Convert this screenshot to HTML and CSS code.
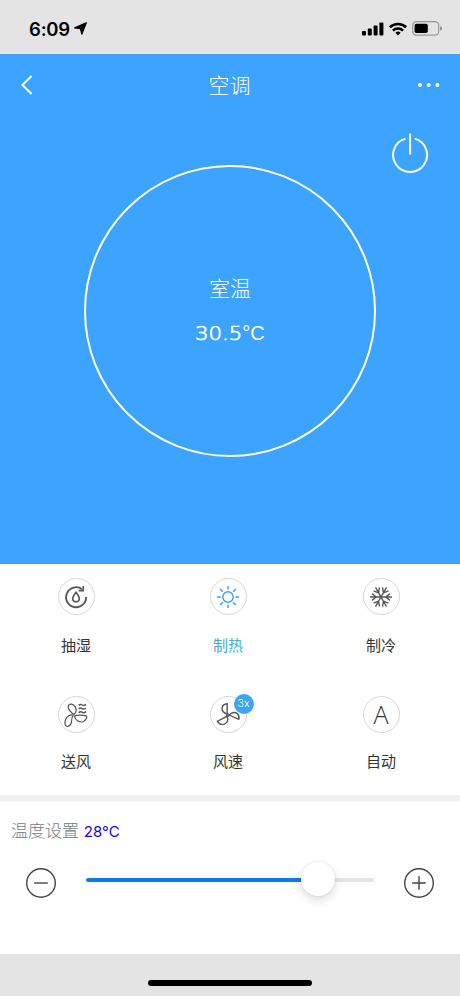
FILE: index.html
```html
<!DOCTYPE html>
<html lang="zh">
<head>
	<meta charset="utf-8">
	<meta name="viewport" content="width=device-width, initial-scale=1">
	<title>空调</title>
	<link rel="stylesheet" href="styles.css">
</head>
<body>
	<div class="status">
		<div class="time">
			<span>6:09</span>
			<svg width="13" height="13" viewBox="0 0 13 13"><path d="M12.3.7L7.8 12.2 6.4 6.6.6 5.9z" fill="#000" stroke="#000" stroke-width="1.2" stroke-linejoin="round"/></svg>
		</div>
		<div class="signals">
			<svg width="22" height="14" viewBox="0 0 22 14"><rect x="0" y="9" width="4" height="4.5" rx="1"/><rect x="5.8" y="6.5" width="4" height="7" rx="1"/><rect x="11.6" y="3.5" width="4" height="10" rx="1"/><rect x="17.4" y=".5" width="4" height="13" rx="1"/></svg>
			<svg width="18" height="14" viewBox="0 0 18 14" fill="none" stroke="#000" stroke-width="2.6"><path d="M.9 5.2a11.7 11.7 0 0 1 16.2 0M3.9 8.6a7.4 7.4 0 0 1 10.2 0"/><path d="M6.3 10.8a4 4 0 0 1 5.4 0L9 13.5z" fill="#000" stroke="none"/></svg>
			<svg width="31" height="15" viewBox="0 0 31 15"><rect x=".7" y=".7" width="26" height="13.4" rx="3.6" fill="none" stroke="#999" stroke-width="1.2"/><rect x="2.6" y="2.7" width="13.2" height="9.4" rx="1.8"/><path d="M28.2 5v4.8q1.8-.8 1.8-2.4T28.2 5z" fill="#888"/></svg>
		</div>
	</div>
	<header class="hero">
		<div class="nav">
			<svg class="back" width="14" height="20" viewBox="0 0 14 20"><path d="M11.6 1L2.4 10l9.2 9"/></svg>
			<h1>空调</h1>
			<svg class="more" width="24" height="6" viewBox="0 0 24 6"><circle cx="3" cy="3" r="2"/><circle cx="11.7" cy="3" r="2"/><circle cx="20.4" cy="3" r="2"/></svg>
		</div>
		<svg class="power" width="38" height="42" viewBox="0 0 38 42"><path d="M14.5 6.6a17 17 0 1 0 9.2 0M19.1 1.4v21"/></svg>
		<div class="dial">
			<p class="room">室温</p>
			<p class="degree"><span class="digits">30.5</span><span class="unit">°C</span></p>
		</div>
	</header>
	<main>
		<div class="modes">
			<div class="mode">
				<div class="icon"><svg width="26" height="26" viewBox="0 0 26 26"><path d="M19.2 5.3A10 10 0 1 0 23.1 13" stroke-width="1.8"/><path d="M20.3 2v4.6h-4.6M13 8.3c-2 2.7-3.3 4.4-3.3 6.3a3.3 3.3 0 0 0 6.6 0c0-1.9-1.3-3.6-3.3-6.3z" stroke-width="1.6"/></svg></div>
				<span>抽湿</span>
			</div>
			<div class="mode on">
				<div class="icon"><svg width="26" height="26" viewBox="0 0 26 26" stroke-width="1.4"><circle cx="13" cy="13" r="5.2"/><path d="M13 2v3.6M13 20.4V24M2 13h3.6M20.4 13H24M5.1 5.1l2.7 2.7M18.2 18.2l2.7 2.7M5.1 20.9l2.7-2.7M18.2 7.8l2.7-2.7"/></svg></div>
				<span>制热</span>
			</div>
			<div class="mode">
				<div class="icon">
					<svg width="26" height="26" viewBox="0 0 26 26" stroke-width="1.4">
						<g id="arm"><path d="M13 13H2M8.2 13L4 9.6M8.2 13L4 16.4"/></g>
						<use href="#arm" transform="rotate(60 13 13)"/><use href="#arm" transform="rotate(120 13 13)"/><use href="#arm" transform="rotate(180 13 13)"/><use href="#arm" transform="rotate(240 13 13)"/><use href="#arm" transform="rotate(300 13 13)"/>
					</svg>
				</div>
				<span>制冷</span>
			</div>
			<div class="mode low">
				<div class="icon"><svg width="26" height="26" viewBox="0 0 26 26" stroke-width="1.2"><path d="M11.3 12.2C8.6 12 4.4 6.6 5.4 3.6c1-2.4 5-1.8 6.8 1.3 1.3 2.4 1.2 5.4-.9 7.3z"/><path d="M10.2 13c-2.9-.9-6.4 1.3-7.7 4.8-1.1 3.1-.6 6.2 1.4 6.5 3.3.3 4.8-2.8 4.8-6.2 0-2.3.6-3.6 1.5-5.1z"/><path d="M11.4 14.1c2.7-1 8.8-.9 12-.2 1.3 1.4-.8 5-3.7 5.9-3.6.9-7.4-1.5-8.3-5.7z"/><path d="M15.6 3.4q1.8-1.6 3.6-.4t3.8-.6M15.6 7q1.8-1.6 3.6-.4t3.8-.6M15.6 10.6q1.8-1.6 3.6-.4t3.8-.6" stroke-width="1.5"/></svg></div>
				<span>送风</span>
			</div>
			<div class="mode low">
				<div class="icon">
					<svg width="26" height="26" viewBox="0 0 26 26" stroke-width="1.4"><path d="M12.2 11.9C8.4 11.2 6.4 8.4 7.2 5.2 7.9 2.9 9.8 2 12.2 1.8z"/><path d="M14.2 13.1c2.4-2.8 5.8-3.5 8.2-1.4 1.7 1.5 1.9 3.7 1.3 5.7z"/><path d="M12 14.3c1.6 3.3.5 6.6-2.6 7.9-2.8 1-5.6-.4-7-3z"/><circle cx="12.8" cy="13.1" r="1.2"/></svg>
					<i class="badge">3x</i>
				</div>
				<span>风速</span>
			</div>
			<div class="mode low">
				<div class="icon letter">A</div>
				<span>自动</span>
			</div>
		</div>
		<div class="setting">
			<p class="label">温度设置 <b>28°C</b></p>
			<div class="control">
				<svg class="step" width="30" height="30" viewBox="0 0 30 30"><circle cx="15" cy="15" r="14.3"/><path d="M8.2 15h13.6"/></svg>
				<div class="track"><div class="fill"></div><div class="thumb"></div></div>
				<svg class="step" width="30" height="30" viewBox="0 0 30 30"><circle cx="15" cy="15" r="14.3"/><path d="M8.2 15h13.6M15 8.2v13.6"/></svg>
			</div>
		</div>
	</main>
	<footer class="bottom"><div class="home"></div></footer>
</body>
</html>
```
FILE: styles.css
```css
*{box-sizing: border-box;}
body{margin: 0;height: 996px;display: flex;flex-direction: column;font-family: 'Inter', 'Noto Sans CJK SC', sans-serif;background-color: #fff;color: #333;}
svg{display: block;flex: none;}
p, h1{margin: 0;font-weight: normal;}

.status{height: 54px;padding: 3px 17px 0 29px;display: flex;justify-content: space-between;align-items: center;background-color: #e4e4e4;color: #000;}
.time, .signals{display: flex;align-items: center;}
.time{gap: 4px;font-size: 18.5px;font-weight: 600;letter-spacing: -0.2px;}
.signals{gap: 5px;}

.hero{height: 510px;display: flex;flex-direction: column;align-items: center;background-color: #3ca4ff;color: #fff;}
.nav{width: 100%;height: 62px;padding: 0 19px 0 20px;display: flex;justify-content: space-between;align-items: center;}
.nav h1{font-size: 21px;font-weight: 300;line-height: 30px;margin: 2px 0 0 8px;}
.back, .power{fill: none;stroke: #fff;stroke-width: 2;}
.more{fill: #fff;}
.power{align-self: flex-end;margin: 16px 31px 0 0;}
.dial{width: 292px;height: 292px;margin-top: -9.5px;padding-top: 107.5px;border: 2px solid #fff;border-radius: 50%;text-align: center;}
.room{font-size: 21px;font-weight: 300;line-height: 30px;}
.degree{display: flex;justify-content: center;align-items: center;height: 28px;margin-top: 15px;}
.digits{width: 47px;font-family: 'DejaVu Sans', sans-serif;font-size: 19px;font-weight: 200;text-align: left;-webkit-text-stroke: 0.7px #fff;transform: scaleX(1.12);transform-origin: left;}
.unit{font-family: 'Liberation Sans', sans-serif;font-size: 20px;}

.modes{height: 231px;padding: 14px 2px 0 0;display: grid;grid-template-columns: 152px 152px 154px;grid-auto-rows: 117px;}
.mode{display: flex;flex-direction: column;align-items: center;gap: 19px;font-size: 15px;line-height: 24px;}
.low{padding-top: 1px;gap: 17px;}
.icon{position: relative;width: 37px;height: 37px;display: flex;justify-content: center;align-items: center;border: 1px solid #d6d6d6;border-radius: 50%;}
.icon svg{fill: none;stroke: #555;}
.on{color: #43acd0;}
.on svg{stroke: #3b9df0;}
.letter{padding-bottom: 2px;font-family: 'Open Sans', sans-serif;font-size: 25px;font-weight: 300;line-height: 34px;color: #333;}
.badge{position: absolute;top: -3px;right: -8px;width: 20px;height: 20px;border-radius: 50%;background-color: #3ca4f5;color: #fff;font-size: 10.5px;font-style: normal;font-weight: 300;line-height: 20px;text-align: center;}

.setting{height: 159px;border-top: 6px solid #efefef;padding: 17px 26px 0;}
.label{margin-left: -15px;font-size: 17px;font-weight: 300;line-height: 26px;color: #757c86;}
.label b{font-size: 15px;font-weight: normal;color: #1a00e0;}
.control{display: flex;justify-content: space-between;align-items: center;margin-top: 23px;}
.step{fill: none;stroke: #444;stroke-width: 1.4;}
.track{position: relative;width: 288px;height: 4px;margin-top: -6px;background-color: #e4e4e4;border-radius: 2px;}
.fill{width: 232px;height: 4px;background-color: #0b7bef;border-radius: 2px;}
.thumb{position: absolute;top: -16px;left: 215px;width: 34px;height: 34px;border-radius: 50%;background-color: #fff;box-shadow: 0 4px 10px rgba(0,0,0,.14), 0 0 2px rgba(0,0,0,.12);}

.bottom{flex: 1;padding-top: 26px;background-color: #e4e4e4;}
.home{width: 164px;height: 6px;margin: 0 auto;border-radius: 3px;background-color: #000;}
```
